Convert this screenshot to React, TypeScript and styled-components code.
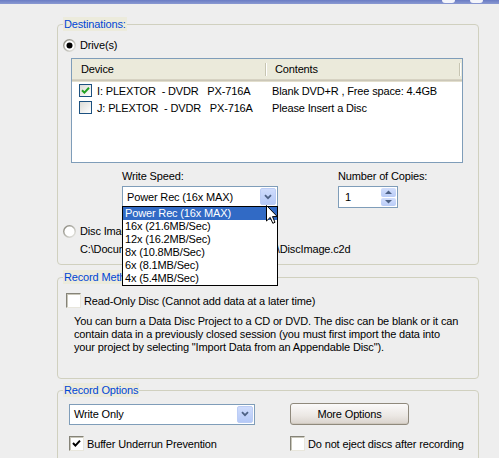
import React from 'react';
import styled, { createGlobalStyle } from 'styled-components';

const GlobalStyle = createGlobalStyle`
  html, body {
    margin: 0;
    padding: 0;
    background: #eeeeee;
  }
  body {
    font-family: 'Liberation Sans', Arial, sans-serif;
    font-size: 11px;
    letter-spacing: -0.15px;
    color: #000;
  }
`;

const Window = styled.div`
  width: 499px;
  height: 458px;
  overflow: hidden;
  background: #eeeeee;
`;

const TitleEdge = styled.div`
  height: 4px;
  background: linear-gradient(#6a7cc4, #8a99d2);
  display: flex;
  justify-content: flex-end;
  gap: 15px;
  padding-right: 16px;
`;

const TitleBump = styled.div`
  width: 13px;
  height: 3px;
  background: #f4f5fb;
  border-radius: 0 0 6px 6px;
`;

const Content = styled.div`
  padding: 13px 0 0 57px;
  display: flex;
  flex-direction: column;
`;

const Group = styled.fieldset<{ $gap?: number; $bottom: number }>`
  width: 422px;
  box-sizing: border-box;
  margin: ${(p) => p.$gap ?? 0}px 0 0 0;
  padding: 0 0 ${(p) => p.$bottom}px 5px;
  border: 1px solid #d0d0bf;
  border-radius: 4px;
  min-width: 0;
`;

const Legend = styled.legend`
  padding: 0 1px;
  line-height: 14px;
  color: #0046d5;
  background: #ecebdc;
`;

const Row = styled.div<{ $top: number; $left?: number }>`
  display: flex;
  align-items: center;
  margin-top: ${(p) => p.$top}px;
  margin-left: ${(p) => p.$left ?? 0}px;
  white-space: nowrap;
`;

const RadioLabel = styled.span`
  margin-left: 4px;
  line-height: 14px;
`;

const Radio: React.FC<{ checked?: boolean }> = ({ checked }) => (
  <svg width="13" height="13" viewBox="0 0 13 13">
    <defs>
      <linearGradient id={checked ? 'rg1' : 'rg2'} x1="0" y1="0" x2="1" y2="1">
        <stop offset="0" stopColor="#7d7b70" />
        <stop offset="1" stopColor="#f2f2ee" />
      </linearGradient>
    </defs>
    <circle cx="6.5" cy="6.5" r="6.5" fill={`url(#${checked ? 'rg1' : 'rg2'})`} />
    <circle cx="6.5" cy="6.5" r="5" fill="#fff" />
    {checked && <circle cx="6.5" cy="6.5" r="3" fill="#000" />}
  </svg>
);

const ListView = styled.div`
  margin: 6px 0 0 8px;
  width: 392px;
  height: 105px;
  box-sizing: border-box;
  border: 1px solid #7f9db9;
  background: #fff;
`;

const ListHeader = styled.div`
  display: flex;
  height: 20px;
  background: #ebeadb;
  border-bottom: 1px solid #d6d2c2;
  box-shadow: 0 1px 0 #cbc7b8, 0 2px 0 #e2decd;
`;

const HeaderCell = styled.div<{ $width?: number }>`
  display: flex;
  align-items: center;
  width: ${(p) => (p.$width ? `${p.$width}px` : 'auto')};
  flex: ${(p) => (p.$width ? 'none' : '1')};
  padding-left: 9px;
  box-sizing: border-box;
  position: relative;
  &::after {
    content: '';
    position: absolute;
    right: ${(p) => (p.$width ? 0 : 2)}px;
    top: 4px;
    height: 13px;
    width: 1px;
    background: #c7c5b2;
    box-shadow: 1px 0 0 #fff;
  }
`;

const ListBody = styled.div`
  padding-top: 2px;
`;

const ListRow = styled.div`
  display: flex;
  align-items: center;
  height: 17px;
  white-space: pre;
`;

const DeviceCell = styled.div`
  width: 200px;
  display: flex;
  align-items: center;
  padding-left: 7px;
  box-sizing: border-box;
`;

const DeviceName = styled.span`
  margin-left: 5px;
`;

const XpCheck = styled.span`
  width: 13px;
  height: 13px;
  box-sizing: border-box;
  border: 1px solid #1c5180;
  background: linear-gradient(135deg, #dcdcd7, #ffffff);
  display: inline-flex;
  align-items: center;
  justify-content: center;
`;

const ClassicCheck = styled.span`
  width: 15px;
  height: 15px;
  box-sizing: border-box;
  border: 1px solid;
  border-color: #858378 #e8e6dc #e8e6dc #858378;
  box-shadow: inset 1px 1px 0 #c9c7ba;
  background: #fff;
  display: inline-flex;
  align-items: center;
  justify-content: center;
  flex: none;
`;

const CheckLabel = styled.span`
  margin-left: 3px;
  line-height: 14px;
`;

const SpeedRow = styled.div`
  display: flex;
  margin-top: 7px;
  margin-left: 59px;
`;

const Field = styled.div<{ $width: number }>`
  width: ${(p) => p.$width}px;
  display: flex;
  flex-direction: column;
  position: relative;
`;

const FieldLabel = styled.div`
  line-height: 13px;
  margin-bottom: 3px;
  white-space: nowrap;
`;

const Combo = styled.div<{ $width: number }>`
  width: ${(p) => p.$width}px;
  height: 21px;
  box-sizing: border-box;
  border: 1px solid #7f9db9;
  background: #fff;
  display: flex;
  align-items: center;
  position: relative;
`;

const ComboValue = styled.div`
  flex: 1;
  padding-left: 4px;
  white-space: nowrap;
`;

const DropButton = styled.div`
  width: 16px;
  height: 17px;
  margin: 1px;
  box-sizing: border-box;
  border-radius: 2px;
  background: linear-gradient(#cfdcfc, #b5c9f7);
  border: 1px solid #bccdf5;
  display: flex;
  align-items: center;
  justify-content: center;
`;

const Chevron = () => (
  <svg width="8" height="6" viewBox="0 0 8 6">
    <path d="M1 1.2 L4 4.2 L7 1.2" fill="none" stroke="#4d6185" strokeWidth="1.8" />
  </svg>
);

const DropList = styled.div`
  position: absolute;
  top: 100%;
  left: -1px;
  width: 156px;
  box-sizing: border-box;
  border: 1px solid #000;
  background: #fff;
  z-index: 5;
`;

const DropItem = styled.div<{ $selected?: boolean }>`
  line-height: 13px;
  padding-left: 2px;
  white-space: nowrap;
  background: ${(p) => (p.$selected ? '#316ac5' : '#fff')};
  color: ${(p) => (p.$selected ? '#fff' : '#000')};
`;

const Cursor = styled.svg`
  position: absolute;
  left: 143px;
  top: 18px;
  z-index: 6;
`;

const Spinner = styled.div`
  width: 60px;
  height: 22px;
  box-sizing: border-box;
  border: 1px solid #7f9db9;
  background: #fff;
  display: flex;
`;

const SpinValue = styled.div`
  flex: 1;
  padding-left: 6px;
  display: flex;
  align-items: center;
`;

const SpinButtons = styled.div`
  width: 15px;
  margin: 1px 1px 1px 0;
  display: flex;
  flex-direction: column;
  gap: 1px;
`;

const SpinButton = styled.div`
  flex: 1;
  background: linear-gradient(#d2defc, #b9ccf7);
  border-radius: 2px;
  display: flex;
  align-items: center;
  justify-content: center;
`;

const PathText = styled.div`
  margin: 5px 0 0 17px;
  line-height: 13px;
  white-space: nowrap;
`;

const Paragraph = styled.p`
  margin: 7px 0 0 11px;
  line-height: 13px;
  white-space: nowrap;
`;

const OptionsGrid = styled.div`
  display: grid;
  grid-template-columns: 221px auto;
  row-gap: 11px;
  margin: 6px 0 0 6px;
`;

const OptionsCell = styled.div`
  display: flex;
  align-items: center;
  white-space: nowrap;
`;

const XpButton = styled.button`
  width: 119px;
  height: 22px;
  padding: 0;
  font: inherit;
  letter-spacing: inherit;
  color: #000;
  border: 1px solid #8f897c;
  border-radius: 3px;
  background: linear-gradient(#fbfafa, #ebe7e3 60%, #d9d3cc);
  box-shadow: inset 0 -1px 0 #cfc8be;
`;

const GreenTick = () => (
  <svg width="9" height="9" viewBox="0 0 9 9">
    <path d="M1 4.2 L3.4 6.6 L8 1.8" fill="none" stroke="#21a121" strokeWidth="2" />
  </svg>
);

const BlackTick = () => (
  <svg width="9" height="9" viewBox="0 0 9 9">
    <path d="M1 4 L3.4 6.6 L8 1.6" fill="none" stroke="#000" strokeWidth="2" />
  </svg>
);

const Arrow = ({ up }: { up?: boolean }) => (
  <svg width="7" height="4" viewBox="0 0 7 4">
    <path d={up ? 'M0 4 L3.5 0.5 L7 4 Z' : 'M0 0 L3.5 3.5 L7 0 Z'} fill="#4d6185" />
  </svg>
);

const speeds = [
  'Power Rec (16x MAX)',
  '16x (21.6MB/Sec)',
  '12x (16.2MB/Sec)',
  '8x (10.8MB/Sec)',
  '6x (8.1MB/Sec)',
  '4x (5.4MB/Sec)',
];

const drives = [
  { name: 'I: PLEXTOR  - DVDR   PX-716A', contents: 'Blank DVD+R , Free space: 4.4GB', checked: true },
  { name: 'J: PLEXTOR  - DVDR   PX-716A', contents: 'Please Insert a Disc', checked: false },
];

const App: React.FC = () => {
  return (
    <Window>
      <GlobalStyle />
      <TitleEdge>
        <TitleBump />
        <TitleBump />
      </TitleEdge>
      <Content>
        <Group $bottom={8}>
          <Legend>Destinations:</Legend>
          <Row $top={7}>
            <Radio checked />
            <RadioLabel>Drive(s)</RadioLabel>
          </Row>
          <ListView>
            <ListHeader>
              <HeaderCell $width={194}>Device</HeaderCell>
              <HeaderCell>Contents</HeaderCell>
            </ListHeader>
            <ListBody>
              {drives.map((d) => (
                <ListRow key={d.name}>
                  <DeviceCell>
                    <XpCheck>{d.checked && <GreenTick />}</XpCheck>
                    <DeviceName>{d.name}</DeviceName>
                  </DeviceCell>
                  <span>{d.contents}</span>
                </ListRow>
              ))}
            </ListBody>
          </ListView>
          <SpeedRow>
            <Field $width={216}>
              <FieldLabel>Write Speed:</FieldLabel>
              <Combo $width={156}>
                <ComboValue>Power Rec (16x MAX)</ComboValue>
                <DropButton>
                  <Chevron />
                </DropButton>
                <DropList>
                  {speeds.map((s, i) => (
                    <DropItem key={s} $selected={i === 0}>
                      {s}
                    </DropItem>
                  ))}
                </DropList>
                <Cursor width="12" height="19" viewBox="0 0 12 19">
                  <path
                    d="M0.5 0.5 L0.5 16 L4.2 12.4 L6.8 18.3 L9 17.3 L6.5 11.6 L11.3 11.6 Z"
                    fill="#fff"
                    stroke="#000"
                    strokeWidth="1"
                  />
                </Cursor>
              </Combo>
            </Field>
            <Field $width={80}>
              <FieldLabel>Number of Copies:</FieldLabel>
              <Spinner>
                <SpinValue>1</SpinValue>
                <SpinButtons>
                  <SpinButton>
                    <Arrow up />
                  </SpinButton>
                  <SpinButton>
                    <Arrow />
                  </SpinButton>
                </SpinButtons>
              </Spinner>
            </Field>
          </SpeedRow>
          <Row $top={16}>
            <Radio />
            <RadioLabel>Disc Image</RadioLabel>
          </Row>
          <PathText>C:\Documents and Settings\Owner\Media\DiscImage.c2d</PathText>
        </Group>

        <Group $gap={5} $bottom={24}>
          <Legend>Record Method</Legend>
          <Row $top={9} $left={3}>
            <ClassicCheck />
            <CheckLabel>Read-Only Disc (Cannot add data at a later time)</CheckLabel>
          </Row>
          <Paragraph>
            You can burn a Data Disc Project to a CD or DVD. The disc can be blank or it can
            <br />
            contain data in a previously closed session (you must first import the data into
            <br />
            your project by selecting "Import Data from an Appendable Disc").
          </Paragraph>
        </Group>

        <Group $gap={4} $bottom={20}>
          <Legend>Record Options</Legend>
          <OptionsGrid>
            <OptionsCell>
              <Combo $width={186}>
                <ComboValue>Write Only</ComboValue>
                <DropButton>
                  <Chevron />
                </DropButton>
              </Combo>
            </OptionsCell>
            <OptionsCell>
              <XpButton>More Options</XpButton>
            </OptionsCell>
            <OptionsCell>
              <ClassicCheck>
                <BlackTick />
              </ClassicCheck>
              <CheckLabel>Buffer Underrun Prevention</CheckLabel>
            </OptionsCell>
            <OptionsCell>
              <ClassicCheck />
              <CheckLabel>Do not eject discs after recording</CheckLabel>
            </OptionsCell>
          </OptionsGrid>
        </Group>
      </Content>
    </Window>
  );
};

export default App;
